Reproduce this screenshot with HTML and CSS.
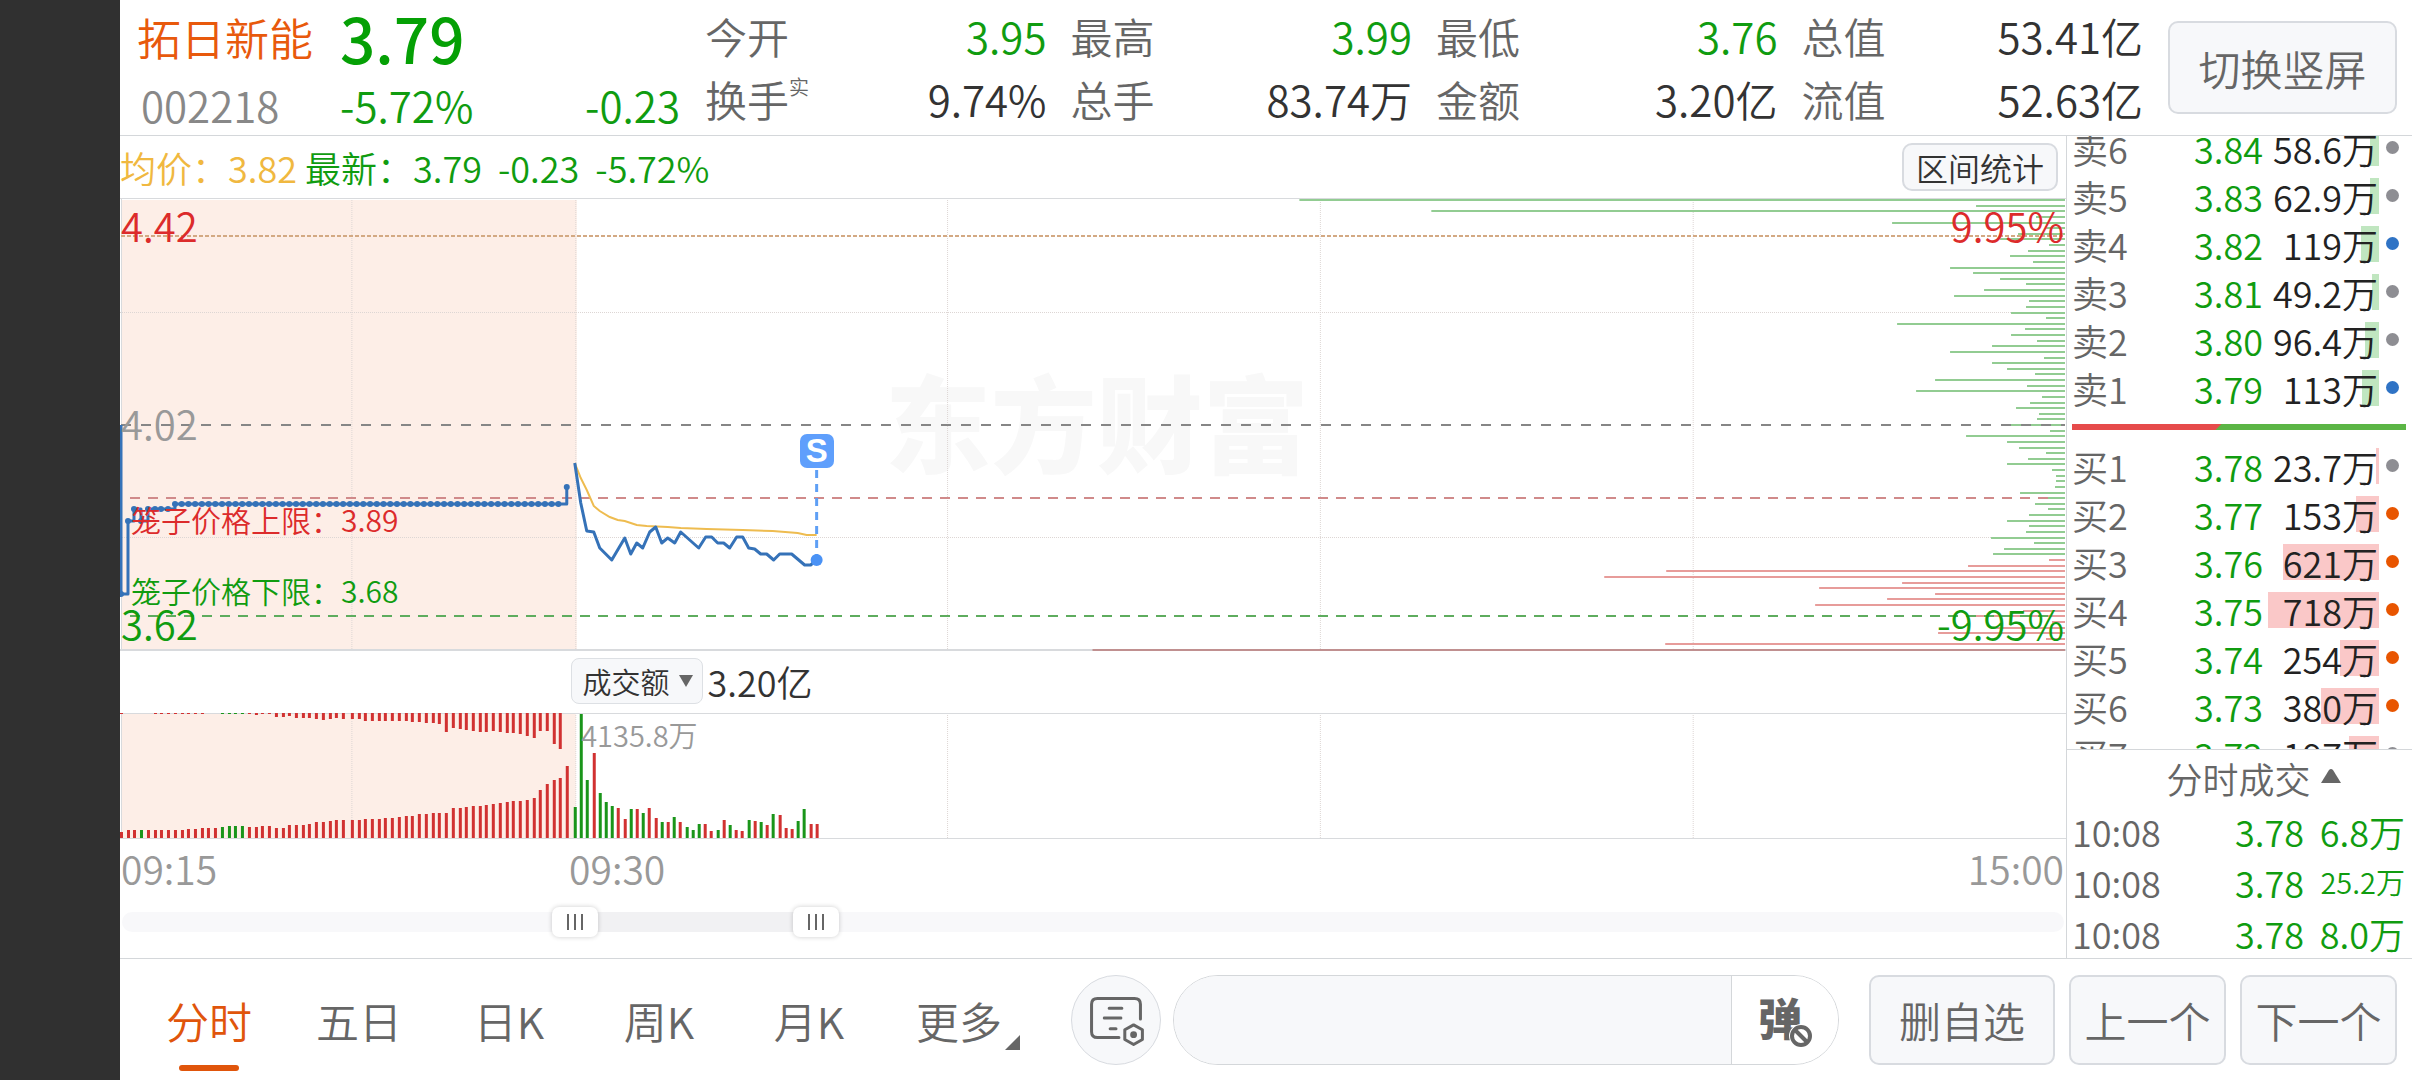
FILE: index.html
```html
<!DOCTYPE html>
<html lang="zh-CN">
<head>
    <meta charset="UTF-8">
    <meta name="viewport" content="width=device-width, initial-scale=1.0">
    <title>拓日新能 002218</title>
    <link rel="stylesheet" href="styles.css">
</head>
<body>
    <header class="quote">
        <div class="stock">
            <h1 class="stock-name">拓日新能</h1>
            <strong class="stock-price">3.79</strong>
            <span class="stock-code">002218</span>
            <span class="stock-change"><span>-5.72%</span><span>-0.23</span></span>
        </div>
        <dl class="stats">
            <div><dt>今开</dt><dd class="down">3.95</dd></div>
            <div><dt>最高</dt><dd class="down">3.99</dd></div>
            <div><dt>最低</dt><dd class="down">3.76</dd></div>
            <div><dt>总值</dt><dd>53.41亿</dd></div>
            <div><dt>换手<sup>实</sup></dt><dd>9.74%</dd></div>
            <div><dt>总手</dt><dd>83.74万</dd></div>
            <div><dt>金额</dt><dd>3.20亿</dd></div>
            <div><dt>流值</dt><dd>52.63亿</dd></div>
        </dl>
        <button class="btn btn-rotate">切换竖屏</button>
    </header>

    <main class="main">
        <section class="charts">
            <div class="info-bar">
                <span class="avg">均价：3.82</span>
                <span class="down">最新：3.79</span>
                <span class="down">-0.23</span>
                <span class="down">-5.72%</span>
                <button class="btn btn-range">区间统计</button>
            </div>

            <div class="price-chart">
                <span class="watermark">东方财富</span>
                <svg id="priceChart" viewBox="0 0 1947 453" preserveAspectRatio="none">
                    <rect class="auction" x="1" y="2" width="456" height="450"/>
                    <path class="grid" d="M232 2V452M456 2V452M828 2V452M1201 2V452M1574 2V452M0 114.500H1947M0 339.500H1947"/>
                    <path class="frame" d="M0 .5H1947M1.500 0V452"/>
                    <path class="frame thick" d="M0 452H1947"/>
                    <g id="depthBars"></g>
                    <path class="line-top" d="M1 38H1946"/>
                    <path class="line-mid" d="M1 227H1946"/>
                    <path class="line-upper" d="M10 300H1930"/>
                    <path class="line-lower" d="M10 418H1930"/>
                    <path class="price" d="M1 227V396H8V323H14V311H21V323H28V311H55V306H447V289"/>
                    <g id="auctionDots"></g>
                    <polyline class="average" points="455,265 461,280 467,292 474,308 480,313 490,319 498,322 505,323 517,327 527,328 548,329 561,330 587,331 623,332 653,333 678,335 687,337 697,337"/>
                    <polyline class="price" points="455,265 461,305 467,333 474,334 480,350 492,362 505,340 511,356 517,345 523,350 530,334 536,329 542,345 548,340 555,345 561,334 579,350 586,339 592,339 598,345 604,345 610,350 617,339 623,339 629,350 635,351 641,356 647,356 654,362 660,356 672,356 685,367 691,367 697,362"/>
                    <path class="signal-line" d="M697 272V362"/>
                    <circle class="signal-dot" cx="697" cy="362" r="6"/>
                </svg>
                <span class="label label-high">4.42</span>
                <span class="label label-mid">4.02</span>
                <span class="label label-low">3.62</span>
                <span class="label label-high right">9.95%</span>
                <span class="label label-low right">-9.95%</span>
                <span class="label cage cage-upper">笼子价格上限：3.89</span>
                <span class="label cage cage-lower">笼子价格下限：3.68</span>
                <span class="signal">S</span>
            </div>

            <div class="volume-bar">
                <span class="select-wrap">
                    <select class="select" aria-label="指标">
                        <option>成交额</option>
                    </select>
                    <svg class="caret" viewBox="0 0 14 12"><path d="M0 0H14L7 12Z"/></svg>
                </span>
                <span>3.20亿</span>
            </div>

            <div class="volume-chart">
                <svg viewBox="0 0 1947 126" preserveAspectRatio="none">
                    <rect class="auction" x="1" y="0" width="455" height="125"/>
                    <path class="grid" d="M232 0V125M456 0V125M828 0V125M1201 0V125M1574 0V125"/>
                    <path class="frame" d="M0 .5H1947M0 125.500H1947M1.500 0V125"/>
                    <g id="volumeBars"></g>
                </svg>
                <span class="label volume-max">4135.8万</span>
            </div>

            <div class="time-axis">
                <span class="time-start">09:15</span>
                <span>09:30</span>
                <span class="time-end">15:00</span>
            </div>

            <div class="zoom-slider">
                <input type="range" min="0" max="1000" value="227" aria-label="开始时间">
                <input type="range" min="0" max="1000" value="354" aria-label="结束时间">
            </div>
        </section>

        <aside class="side">
            <div class="book">
                <table class="levels" id="sellLevels"></table>
                <svg class="ratio" viewBox="0 0 333 6" preserveAspectRatio="none">
                    <path fill="#5bb545" d="M0 0H333V6H0Z"/>
                    <path fill="#e64b4b" d="M0 0H149L143 6H0Z"/>
                </svg>
                <table class="levels" id="buyLevels"></table>
            </div>
            <div class="trades">
                <button class="trades-title">分时成交
                    <svg viewBox="0 0 20 14"><path d="M0 14L8 1Q10 -1 12 1L20 14Z"/></svg>
                </button>
                <table class="trade-list">
                    <tr><td>10:08</td><td class="down">3.78</td><td class="down">6.8万</td></tr>
                    <tr><td>10:08</td><td class="down">3.78</td><td class="down small">25.2万</td></tr>
                    <tr><td>10:08</td><td class="down">3.78</td><td class="down">8.0万</td></tr>
                </table>
            </div>
        </aside>
    </main>

    <footer class="toolbar">
        <nav class="tabs">
            <a class="tab active" href="#">分时</a>
            <a class="tab" href="#">五日</a>
            <a class="tab" href="#">日K</a>
            <a class="tab" href="#">周K</a>
            <a class="tab" href="#">月K</a>
            <a class="tab more" href="#">更多</a>
        </nav>
        <button class="btn-note" aria-label="评论设置">
            <svg viewBox="0 0 90 90">
                <path d="M70 44V29Q70 23 64 23H26Q20 23 20 29V57Q20 63 26 63H48"/>
                <path d="M38 33H51M33 43H50M39 54H45"/>
                <path d="M63 50L72 55V65L63 70L54 65V55Z"/>
                <circle cx="63" cy="60" r="2"/>
            </svg>
        </button>
        <div class="danmu">
            <input type="text" class="danmu-input" aria-label="弹幕">
            <button class="danmu-btn">
                <span>弹</span>
                <svg viewBox="0 0 24 24"><circle class="halo" cx="12" cy="12" r="10"/><circle cx="12" cy="12" r="9"/><path d="M6 6L18 18"/></svg>
            </button>
        </div>
        <div class="actions">
            <button class="btn">删自选</button>
            <button class="btn">上一个</button>
            <button class="btn">下一个</button>
        </div>
    </footer>

    <script src="script.js"></script>
</body>
</html>
```
FILE: styles.css
```css
* {
    box-sizing: border-box;
}

body {
    margin: 0;
    min-height: 100vh;
    display: flex;
    flex-direction: column;
    border-left: 120px solid #303030;
    background-color: #fff;
    color: #333;
    font-family: "Noto Sans CJK SC", sans-serif;
    font-weight: 350;
    font-size: 36px;
    line-height: 1;
}

button,
input,
select {
    font: inherit;
    color: inherit;
}

table {
    width: 100%;
    border-collapse: collapse;
    table-layout: fixed;
}

td {
    padding: 0;
}

.down {
    color: #109c10;
}

.btn {
    padding: 0;
    background-color: #f7f8fa;
    border: 2px solid #d8dbe0;
    border-radius: 10px;
    color: #666;
    font-size: 42px;
    white-space: nowrap;
    cursor: pointer;
}

/* Header */
.quote {
    display: flex;
    align-items: center;
    height: 136px;
    padding-right: 15px;
    border-bottom: 1px solid #d4d7da;
}

.stock {
    flex: 0 0 560px;
    display: grid;
    grid-template-columns: 203px 1fr;
    grid-template-rows: 70px 66px;
    align-items: center;
    padding: 4px 0 0 17px;
}

.stock-name {
    margin: 0;
    font-size: 44px;
    font-weight: 350;
    color: #e8590c;
}

.stock-price {
    font-size: 62px;
    font-weight: 500;
    color: #05a005;
}

.stock-code {
    padding-left: 4px;
    font-size: 42px;
    color: #888;
}

.stock-change {
    display: flex;
    justify-content: space-between;
    font-size: 42px;
    color: #109c10;
}

.stats {
    flex: 1;
    display: grid;
    grid-template-columns: repeat(4, 1fr);
    column-gap: 24px;
    margin: 0 25px;
    font-size: 42px;
}

.stats div {
    display: flex;
    justify-content: space-between;
    align-items: center;
    height: 63px;
}

.stats dt {
    color: #666;
}

.stats sup {
    font-size: 20px;
    line-height: 0;
    vertical-align: 22px;
}

.stats dd {
    margin: 0;
}

.btn-rotate {
    width: 229px;
    height: 93px;
}

/* Main area */
.main {
    flex: 1;
    display: grid;
    grid-template-columns: 1fr 346px;
}

.charts {
    min-width: 0;
}

.info-bar {
    display: flex;
    align-items: center;
    gap: 16px;
    height: 62px;
    padding: 0 8px 0 0;
}

.avg {
    margin-right: -8px;
    color: #f0b840;
}

.btn-range {
    width: 156px;
    height: 48px;
    margin-left: auto;
    font-size: 32px;
    color: #333;
}

.price-chart,
.volume-chart {
    position: relative;
}

.price-chart svg,
.volume-chart svg {
    position: relative;
    display: block;
    width: 100%;
    height: 453px;
}

.volume-chart svg {
    height: 126px;
}

.watermark {
    position: absolute;
    top: 168px;
    left: 39.3%;
    font-size: 106px;
    font-weight: 900;
    color: #f8f8f8;
}

svg path,
svg polyline {
    vector-effect: non-scaling-stroke;
}

.auction {
    fill: #fdeee7;
}

.grid {
    stroke: #ddd6d4;
    stroke-dasharray: 1 1;
}

.frame {
    fill: none;
    stroke: #d8dadd;
}

.thick {
    stroke-width: 2;
}

.line-top {
    stroke: #d3a983;
    stroke-width: 2;
    stroke-dasharray: 4 2;
}

.line-mid {
    stroke: #868686;
    stroke-width: 2;
    stroke-dasharray: 10 10;
}

.line-upper {
    stroke: #d08a8a;
    stroke-width: 2;
    stroke-dasharray: 10 8;
}

.line-lower {
    stroke: #5eac5e;
    stroke-width: 2;
    stroke-dasharray: 10 8;
}

.price {
    fill: none;
    stroke: #3572b8;
    stroke-width: 3;
    stroke-linejoin: round;
}

.average {
    fill: none;
    stroke: #eebc50;
    stroke-width: 2;
}

.signal-line {
    stroke: #5e9ff5;
    stroke-width: 3;
    stroke-dasharray: 8 6;
}

.signal-dot {
    fill: #4a92f5;
}

.signal {
    position: absolute;
    top: 236px;
    left: 35.8%;
    width: 34px;
    height: 34px;
    margin-left: -17px;
    border-radius: 7px;
    background-color: #5f9ffc;
    color: #fff;
    font: bold 33px/34px "Liberation Sans", sans-serif;
    text-align: center;
}

.label {
    position: absolute;
    left: 1px;
    font-size: 40px;
    white-space: nowrap;
}

.label.right {
    left: auto;
    right: 2px;
}

.label-high {
    top: 7px;
    color: #dc2b2b;
}

.label-mid {
    top: 205px;
    color: #999;
}

.label-low {
    bottom: 8px;
    color: #109c10;
}

.cage {
    left: 11px;
    font-size: 30px;
}

.cage-upper {
    top: 306px;
    color: #dc2b2b;
}

.cage-lower {
    top: 377px;
    color: #109c10;
}

.volume-bar {
    display: flex;
    align-items: center;
    gap: 4px;
    height: 62px;
    padding: 0 0 2px 23.2%;
}

.select-wrap {
    position: relative;
}

.select {
    appearance: none;
    display: block;
    width: 132px;
    height: 46px;
    padding: 0 0 0 10px;
    background-color: #f7f8fa;
    border: 1px solid #dde0e4;
    border-radius: 8px;
    font-size: 29px;
}

.caret {
    position: absolute;
    top: 17px;
    right: 10px;
    width: 14px;
    height: 12px;
    fill: #666;
}

.volume-max {
    top: 7px;
    left: 23.7%;
    font-size: 29px;
    color: #999;
}

.time-axis {
    display: grid;
    grid-template-columns: 23.1% 1fr 1fr;
    align-items: center;
    height: 58px;
    padding-right: 2px;
    font-size: 39px;
    color: #999;
}

.time-start {
    padding-left: 1px;
}

.time-end {
    text-align: right;
}

.zoom-slider {
    display: grid;
    align-items: center;
    height: 40px;
    margin: 5px 2px 0;
}

.zoom-slider input {
    grid-area: 1 / 1;
    appearance: none;
    width: 100%;
    height: 20px;
    margin: 0;
    border-radius: 10px;
    background: none;
    pointer-events: none;
}

.zoom-slider input:first-child {
    background: linear-gradient(90deg, #f8f8fa 23%, #f1f1f3 23% 36%, #f8f8fa 36%);
}

.zoom-slider input::-webkit-slider-thumb {
    appearance: none;
    width: 46px;
    height: 30px;
    border-radius: 7px;
    background:
        linear-gradient(90deg, #666 2px, transparent 2px 7px, #666 7px 9px, transparent 9px 14px, #666 14px) center / 16px 16px no-repeat,
        #fff;
    box-shadow: 0 0 5px rgba(0, 0, 0, 0.2);
    pointer-events: auto;
}

/* Order book */
.side {
    border-left: 1px solid #d4d7da;
}

.book {
    height: 613px;
    overflow: hidden;
}

#sellLevels {
    margin-top: -12px;
}

.levels tr {
    height: 48px;
}

.levels td:first-child {
    width: 66px;
    padding-left: 5px;
    color: #666;
}

.levels td:nth-child(2) {
    text-align: right;
}

.levels td:nth-child(3) {
    position: relative;
    width: 116px;
    padding-right: 1px;
    text-align: right;
    color: #222;
}

.levels td:last-child {
    width: 33px;
}

.levels .amount {
    position: relative;
}

.bar {
    position: absolute;
    top: 6px;
    right: 0;
    height: 36px;
}

.bar.sell {
    background-color: #c0e6c0;
}

.bar.buy {
    background-color: #fac8c8;
}

.dot {
    display: block;
    width: 13px;
    height: 13px;
    margin: 0 auto 2px 7px;
    border-radius: 50%;
}

.gray {
    background-color: #8e8e93;
}

.blue {
    background-color: #2f73c5;
}

.orange {
    background-color: #e85500;
}

.ratio {
    display: block;
    width: calc(100% - 11px);
    height: 6px;
    margin: 12px 6px 12px 5px;
}

.trades {
    border-top: 1px solid #d4d7da;
}

.trades-title {
    display: flex;
    align-items: center;
    justify-content: center;
    gap: 10px;
    width: 100%;
    height: 55px;
    padding: 0 0 0 28px;
    border: none;
    background: none;
    color: #666;
}

.trades-title svg {
    width: 20px;
    height: 14px;
    margin-bottom: 4px;
    fill: #666;
}

.trade-list tr {
    height: 51px;
}

.trade-list td {
    width: 101px;
    padding-right: 7px;
    text-align: right;
}

.trade-list td:nth-child(2) {
    width: auto;
}

.trade-list td:first-child {
    padding: 0 0 0 5px;
    text-align: left;
    color: #666;
}

.trade-list .small {
    font-size: 29px;
}

/* Bottom toolbar */
.toolbar {
    display: flex;
    align-items: center;
    height: 122px;
    padding: 0 15px 0 14px;
    border-top: 1px solid #d4d7da;
}

.tabs {
    flex: 0 0 937px;
    display: flex;
    padding-right: 37px;
}

.tab {
    position: relative;
    flex: 1;
    line-height: 88px;
    font-size: 43px;
    text-align: center;
    text-decoration: none;
    color: #666;
}

.tab.active {
    color: #e0550b;
}

.tab.active::after {
    content: "";
    position: absolute;
    bottom: -7px;
    left: calc(50% - 30px);
    width: 60px;
    height: 6px;
    border-radius: 3px;
    background-color: #e0550b;
}

.tab.more::after {
    content: "";
    position: absolute;
    right: 14px;
    bottom: 14px;
    border-left: 15px solid transparent;
    border-bottom: 15px solid #666;
}

.btn-note {
    flex: 0 0 90px;
    height: 90px;
    margin-right: 12px;
    padding: 0;
    border: 1px solid #d8dbe0;
    border-radius: 50%;
    background-color: #f7f8fa;
}

.btn-note svg {
    display: block;
    width: 100%;
    fill: none;
    stroke: #666;
    stroke-width: 3;
    stroke-linecap: round;
    stroke-linejoin: round;
}

.btn-note circle {
    fill: #666;
}

.danmu {
    flex: 1;
    display: flex;
    height: 90px;
    margin-right: 30px;
    border: 1px solid #d4d7da;
    border-radius: 45px;
    overflow: hidden;
}

.danmu-input {
    flex: 1;
    min-width: 0;
    padding: 0 36px;
    border: none;
    background-color: #f7f8fa;
}

.danmu-btn {
    position: relative;
    flex: 0 0 107px;
    padding: 0 10px 6px 0;
    border: none;
    border-left: 1px solid #d4d7da;
    background-color: #fff;
    color: #666;
    font-size: 44px;
    font-weight: 900;
}

.danmu-btn svg {
    position: absolute;
    right: 25px;
    bottom: 16px;
    width: 24px;
    height: 24px;
    fill: #fff;
    stroke: #666;
    stroke-width: 4;
}

.danmu-btn .halo {
    stroke: #fff;
}

.actions {
    display: grid;
    grid-template-columns: 186px 157px 157px;
    gap: 14px;
}

.actions .btn {
    height: 90px;
}
```
FILE: script.js
```js
const RED = '#d13131';
const GREEN = '#1a951a';

// Order quantity per price step, from the upper limit down to the lower limit
const depth = [
    766, 89, 634, 29, 173, 19, 47, 65, 16, 37, 55, 32, 115, 92, 65, 39, 81, 111, 36, 39,
    54, 19, 168, 40, 54, 28, 73, 115, 21, 73, 58, 30, 130, 38, 149, 23, 35, 49, 26, 28,
    57, 15, 99, 58, 46, 19, 37, 58, 13, 9, 9, 10, 45, 17, 30, 17, 36, 58, 36, 39,
    74, 31, 61, 72, 16, 97, 399, 461, 163, 246, 130, 178, 250, 42, 94, 13, 71, 127, 19, 400,
    973
];
const firstBuy = 64;

// Call auction: matched volume (bottom) and unmatched volume (top)
const matched = [
    6, 8, 8, 8, 8, 8, 8, 8, 8, 8, 9, 9, 10, 10, 10, 11, 12, 12, 12, 11, 11, 12, 12, 10, 10,
    13, 13, 13, 14, 16, 16, 17, 18, 18, 18, 18, 19, 19, 19, 20, 20, 21, 22, 22, 24, 24, 25,
    25, 25, 30, 30, 31, 32, 32, 33, 34, 35, 36, 37, 37, 38, 40, 48, 54, 58, 60, 72
];
const unmatched = [
    1, 0, 0, 0, 0, 1, 1, 1, 1, 1, 1, 1, 1, 0, 0, 1, 1, 1, 1, 1, 2, 1, 1, 4, 4,
    3, 5, 5, 5, 6, 7, 6, 5, 6, 6, 6, 8, 8, 8, 8, 8, 8, 8, 9, 9, 10, 10,
    11, 19, 15, 16, 17, 18, 19, 19, 18, 19, 20, 20, 21, 23, 25, 18, 18, 31, 36, 0
];
const auctionGreen = [3, 15, 16, 17, 18];

// Continuous trading, negative = falling minute
const volume = [
    -31, -124, -58, 85, -45, -36, -32, 30, 19, -29, 29, -25, 30, 20, -16, 16, -21, 16, -11, -8,
    -14, 14, 7, -8, 18, -13, 8, 7, -18, 17, -16, 13, -24, 23, 10, 9, -17, -29, 14, 14
];

const sell = [
    ['卖6', '3.84', '58.6万', 9, 'gray'],
    ['卖5', '3.83', '62.9万', 9, 'gray'],
    ['卖4', '3.82', '119万', 18, 'blue'],
    ['卖3', '3.81', '49.2万', 7, 'gray'],
    ['卖2', '3.80', '96.4万', 14, 'gray'],
    ['卖1', '3.79', '113万', 17, 'blue']
];
const buy = [
    ['买1', '3.78', '23.7万', 3, 'gray'],
    ['买2', '3.77', '153万', 23, 'orange'],
    ['买3', '3.76', '621万', 96, 'orange'],
    ['买4', '3.75', '718万', 111, 'orange'],
    ['买5', '3.74', '254万', 39, 'orange'],
    ['买6', '3.73', '380万', 58, 'orange'],
    ['买7', '3.72', '197万', 30, 'gray']
];

function rect(x, y, w, h, fill) {
    return `<rect x="${x}" y="${y}" width="${w}" height="${h}" fill="${fill}"/>`;
}

function drawDepth() {
    const right = 1946;
    document.getElementById('depthBars').innerHTML = depth.map((w, i) => {
        let fill = i < firstBuy ? '#92cc92' : '#e79c9a';
        // the lowest step lies on the frame line
        if (i === depth.length - 1) fill = '#c09090';
        return rect(right - w, Math.round(1 + i * 5.625), w, 2, fill);
    }).join('');
}

function drawDots() {
    const points = [[1, 396], [8, 323], [14, 311], [21, 323], [28, 311], [35, 311], [41, 311], [48, 311], [447, 289]];
    for (let x = 55; x < 445; x += 6.73) {
        points.push([x, 306]);
    }
    document.getElementById('auctionDots').innerHTML = points
        .map(([x, y]) => `<circle cx="${x}" cy="${y}" r="3" fill="#3572b8"/>`)
        .join('');
}

function drawVolume() {
    const base = 125;
    let html = '';
    matched.forEach((h, i) => {
        const x = Math.round(i * 6.73 + (i > 33 ? 2 : 0));
        const fill = auctionGreen.includes(i) ? GREEN : RED;
        html += rect(x, base - h, 3, h, fill);
        html += rect(x, 0, 3, unmatched[i], fill);
    });
    volume.forEach((v, i) => {
        const h = Math.abs(v);
        html += rect(Math.round(454 + i * 6.2), base - h, 3, h, v < 0 ? GREEN : RED);
    });
    document.getElementById('volumeBars').innerHTML = html;
}

function fillLevels(id, rows, side) {
    document.getElementById(id).innerHTML = rows.map(([name, price, amount, width, dot]) => `
        <tr>
            <td>${name}</td>
            <td class="down">${price}</td>
            <td><span class="bar ${side}" style="width: ${width}px"></span><span class="amount">${amount}</span></td>
            <td><span class="dot ${dot}"></span></td>
        </tr>`).join('');
}

drawDepth();
drawDots();
drawVolume();
fillLevels('sellLevels', sell, 'sell');
fillLevels('buyLevels', buy, 'buy');
```
